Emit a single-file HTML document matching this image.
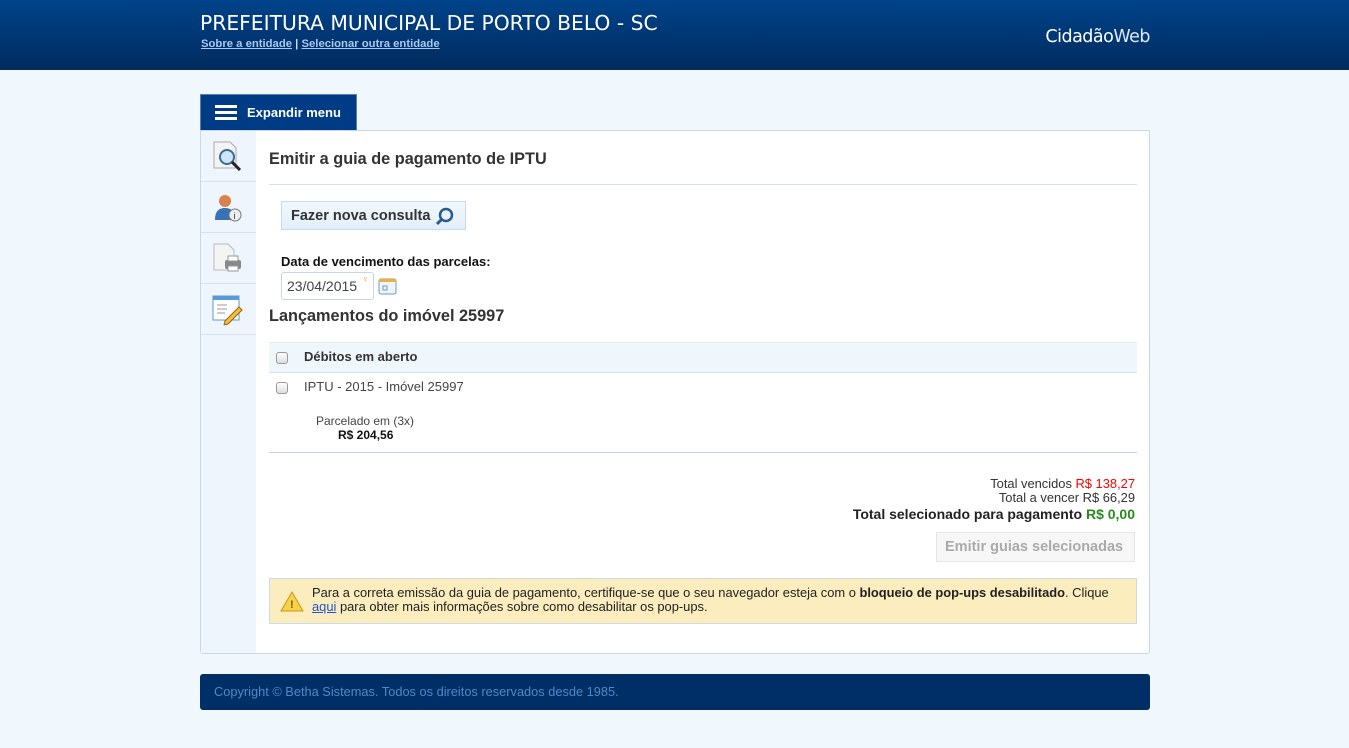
<!DOCTYPE html>
<html><head><meta charset="utf-8"><style>
*{margin:0;padding:0;box-sizing:border-box}
body{width:1349px;height:748px;background:#f0f7fd;font-family:"Liberation Sans",sans-serif;color:#333;position:relative;overflow:hidden;font-size:13px}
.hdr{position:absolute;left:0;top:0;width:1349px;height:70px;background:linear-gradient(#00438a,#002b5e)}
.ttl{position:absolute;left:200px;top:11px;color:#fff;font-size:20.3px;font-family:"DejaVu Sans","Liberation Sans",sans-serif;letter-spacing:0}
.lnk{position:absolute;left:201px;top:38px;font-size:11.3px;font-weight:bold;color:#c9dcf2}
.lnk u{color:#a9c8ee}
.cw{position:absolute;right:199px;top:27px;color:#fff;font-size:17.5px;font-family:"DejaVu Sans",sans-serif;letter-spacing:-0.5px}
.cw span{font-weight:normal;color:#dfe8f3}
.tab{position:absolute;left:200px;top:94px;width:157px;height:36px;background:#003c85;color:#fff;font-weight:bold;font-size:13px;border:1px solid #5a7ea8;border-bottom:none}
.tab i{position:absolute;left:14px;width:22px;height:3px;background:#fff}
.box{position:absolute;left:200px;top:130px;width:950px;height:524px;background:#fff;border:1px solid #c9d8e6;border-radius:0 0 3px 3px}
.side{position:absolute;left:0;top:0;width:55px;height:522px;background:#eef5fc}
.side div{height:51px;border-bottom:1px solid #d5e2ee;position:relative}
.abs{position:absolute}
.cb{position:absolute;width:12px;height:12px;border:1px solid #999;border-radius:3px;background:linear-gradient(#fff,#ddd)}
.ft{position:absolute;left:200px;top:674px;width:950px;height:36px;background:#002f68;border-radius:3px;color:#4f87c8;font-size:12.8px;padding:10px 14px}
</style></head><body>
<div class="hdr">
<div class="ttl">PREFEITURA MUNICIPAL DE PORTO BELO - SC</div>
<div class="lnk"><u>Sobre a entidade</u> | <u>Selecionar outra entidade</u></div>
<div class="cw">Cidadão<span>Web</span></div>
</div>
<div class="tab"><i style="top:10px"></i><i style="top:16px"></i><i style="top:22px"></i><span style="position:absolute;left:46px;top:10px">Expandir menu</span></div>
<div class="box">
<div class="side">
<div><svg class="abs" style="left:10px;top:9px" width="32" height="32"><path d="M3 2h16l6 6v20H3z" fill="#f4f4f4" stroke="#aaa"/><circle cx="16" cy="17" r="7" fill="#cfe6f7" stroke="#3a6b9a" stroke-width="2"/><path d="M21 22l8 8" stroke="#222" stroke-width="3"/></svg></div>
<div><svg class="abs" style="left:10px;top:10px" width="32" height="32"><circle cx="14" cy="9" r="6" fill="#d9824b"/><path d="M4 28c0-9 4-12 10-12s10 3 10 12z" fill="#3973b5"/><circle cx="24" cy="23" r="6" fill="#eee" stroke="#777"/><text x="22.5" y="27" font-size="9" fill="#333">i</text></svg></div>
<div><svg class="abs" style="left:10px;top:9px" width="32" height="32"><path d="M3 2h14l6 6v20H3z" fill="#f4f4f4" stroke="#bbb"/><rect x="14" y="18" width="16" height="9" rx="2" fill="#888"/><rect x="17" y="14" width="10" height="5" fill="#fff" stroke="#999"/><rect x="17" y="24" width="10" height="5" fill="#fff" stroke="#999"/></svg></div>
<div><svg class="abs" style="left:10px;top:9px" width="32" height="32"><rect x="2" y="3" width="26" height="24" fill="#fff" stroke="#5b9bd5"/><rect x="2" y="3" width="26" height="4" fill="#5b9bd5"/><path d="M6 12h10M6 16h10M6 20h8" stroke="#999"/><path d="M14 28l14-14 3 3-14 14-4 1z" fill="#f0c040" stroke="#a06000"/></svg></div>
</div>
<div class="abs" style="left:68px;top:19px;font-size:16.3px;font-weight:bold;color:#333">Emitir a guia de pagamento de IPTU</div>
<div class="abs" style="left:68px;top:53px;width:868px;height:1px;background:#d6e2ec"></div>
<div class="abs" style="left:80px;top:70px;width:185px;height:29px;background:linear-gradient(#f1f8fe,#e1effb);border:1px solid #c5dbee;font-size:14.5px;font-weight:bold;padding:6px 9px;color:#333">Fazer nova consulta <svg style="position:absolute;left:153px;top:5px" width="20" height="20"><circle cx="11" cy="8" r="6" fill="none" stroke="#2a5b8e" stroke-width="2.5"/><path d="M7 12l-5 5" stroke="#2a5b8e" stroke-width="3"/></svg></div>
<div class="abs" style="left:80px;top:123px;font-size:13px;font-weight:bold;color:#111">Data de vencimento das parcelas:</div>
<div class="abs" style="left:80px;top:141px;width:93px;height:28px;border:1px solid #c9d6e2;border-radius:3px;font-size:14px;padding:5px 5px;color:#444">23/04/2015<span style="position:absolute;left:80px;top:1px;font-size:9px;color:#d90">♀</span></div>
<svg class="abs" style="left:177px;top:146px" width="20" height="18"><rect x="1" y="2" width="17" height="15" rx="2" fill="#eef5fc" stroke="#6a9cc9"/><rect x="1" y="2" width="17" height="3" fill="#f0b030"/><rect x="5" y="9" width="4" height="4" fill="none" stroke="#6a9cc9"/></svg>
<div class="abs" style="left:68px;top:176px;font-size:16.3px;font-weight:bold;color:#333">Lançamentos do imóvel 25997</div>
<div class="abs" style="left:68px;top:211px;width:868px;height:31px;background:#eff6fc;border-top:1px solid #e2ecf4;border-bottom:1px solid #d6e2ec"></div>
<div class="cb" style="left:75px;top:221px"></div>
<div class="abs" style="left:103px;top:218px;font-weight:bold;font-size:13px">Débitos em aberto</div>
<div class="cb" style="left:75px;top:251px"></div>
<div class="abs" style="left:103px;top:248px;font-size:13px;color:#444">IPTU - 2015 - Imóvel 25997</div>
<div class="abs" style="left:115px;top:283px;font-size:12px;color:#444">Parcelado em (3x)</div>
<div class="abs" style="left:137px;top:297px;font-size:12px;font-weight:bold;color:#111">R$ 204,56</div>
<div class="abs" style="left:68px;top:321px;width:868px;height:1px;background:#c6d6e4"></div>
<div class="abs" style="right:14px;top:346px;text-align:right;font-size:12.9px;line-height:14px;color:#333">Total vencidos <span style="color:#f00">R$ 138,27</span><br>Total a vencer R$ 66,29<br><b style="font-size:14px;line-height:18px;color:#222">Total selecionado para pagamento <span style="color:#2b8a1e">R$ 0,00</span></b></div>
<div class="abs" style="left:735px;top:401px;width:199px;height:30px;border:1px solid #e6e6e6;background:#f7f7f7;color:#aaa;font-weight:bold;font-size:14.5px;padding:6px 8px">Emitir guias selecionadas</div>
<div class="abs" style="left:68px;top:447px;width:868px;height:46px;background:#fcedbf;border:1px solid #ccd9e6;font-size:12.9px;line-height:14px;padding:7px 20px 0 42px;color:#222">Para a correta emissão da guia de pagamento, certifique-se que o seu navegador esteja com o <b>bloqueio de pop-ups desabilitado</b>. Clique<br><u style="color:#2255cc">aqui</u> para obter mais informações sobre como desabilitar os pop-ups.
<svg style="position:absolute;left:10px;top:11px" width="24" height="22"><path d="M12 2L23 21H1z" fill="#f6d24a" stroke="#c89a10"/><text x="10" y="18" font-size="11" font-weight="bold" fill="#7a5a00">!</text></svg></div>
</div>
<div class="ft">Copyright © Betha Sistemas. Todos os direitos reservados desde 1985.</div>
</body></html>
